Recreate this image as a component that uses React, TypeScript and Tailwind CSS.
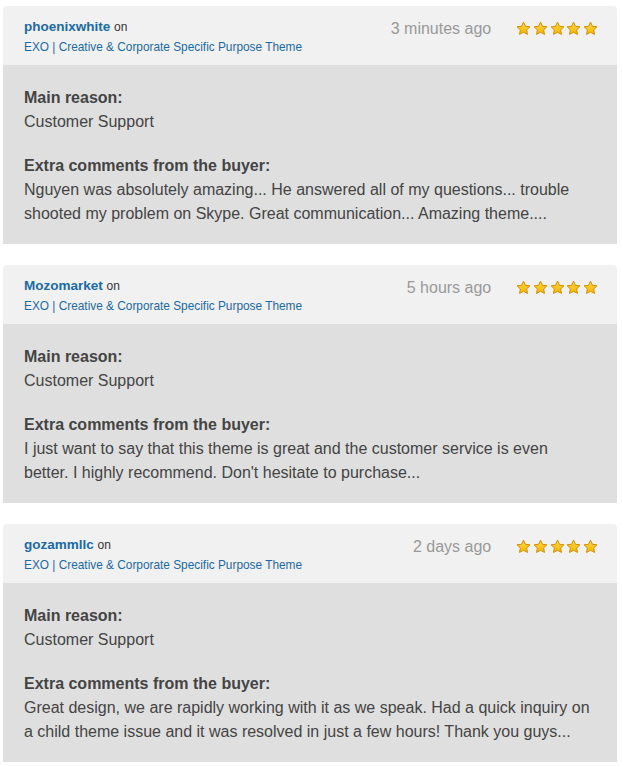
const reviews = [
  {
    user: "phoenixwhite",
    time: "3 minutes ago",
    comment:
      "Nguyen was absolutely amazing... He answered all of my questions... trouble shooted my problem on Skype. Great communication... Amazing theme....",
  },
  {
    user: "Mozomarket",
    time: "5 hours ago",
    comment:
      "I just want to say that this theme is great and the customer service is even better. I highly recommend. Don't hesitate to purchase...",
  },
  {
    user: "gozammllc",
    time: "2 days ago",
    comment:
      "Great design, we are rapidly working with it as we speak. Had a quick inquiry on a child theme issue and it was resolved in just a few hours! Thank you guys...",
  },
];

function Star() {
  return (
    <svg width="15" height="15" viewBox="0 0 24 24">
      <defs>
        <linearGradient id="sg" x1="0" y1="0" x2="0" y2="1">
          <stop offset="0" stopColor="#ffd84a" />
          <stop offset="1" stopColor="#f7b500" />
        </linearGradient>
      </defs>
      <path
        d="M12 1.8l3.1 6.6 7.2.9-5.3 5 1.4 7.2L12 18l-6.4 3.5 1.4-7.2-5.3-5 7.2-.9z"
        fill="url(#sg)"
        stroke="#d48f00"
        strokeWidth="1.6"
        strokeLinejoin="round"
      />
    </svg>
  );
}

function ReviewCard({ user, time, comment }: { user: string; time: string; comment: string }) {
  return (
    <div className="rounded-t-[4px] overflow-hidden">
      <div className="bg-[#f1f1f1] h-[59px] pl-[21px] pr-[19px] pt-[13px] flex justify-between">
        <div>
          <div className="text-[13.5px] leading-[16px] text-[#333]">
            <span className="font-bold text-[#1a6aa5]">{user}</span>{" "}
            <span className="text-[12px]">on</span>
          </div>
          <div className="text-[11.85px] leading-[16px] mt-[4px] text-[#1a6aa5]">
            EXO | Creative &amp; Corporate Specific Purpose Theme
          </div>
        </div>
        <div className="flex items-start gap-[25px] pt-[0px]">
          <span className="text-[16px] leading-[20px] text-[#999]">{time}</span>
          <div className="flex gap-[1.7px] pt-[2px]">
            <Star />
            <Star />
            <Star />
            <Star />
            <Star />
          </div>
        </div>
      </div>
      <div className="bg-[#dfdfdf] px-[21px] pt-[21px] pb-[18px] text-[16px] leading-[24px] text-[#444]">
        <div className="font-bold">Main reason:</div>
        <div>Customer Support</div>
        <div className="font-bold mt-[20px]">Extra comments from the buyer:</div>
        <div>{comment}</div>
      </div>
    </div>
  );
}

export default function App() {
  return (
    <div
      className="bg-white min-h-screen px-[3px] pt-[6px] flex flex-col gap-[21px] w-[620px]"
      style={{ fontFamily: '"Liberation Sans", Arial, sans-serif' }}
    >
      {reviews.map((r) => (
        <ReviewCard key={r.user} {...r} />
      ))}
    </div>
  );
}
